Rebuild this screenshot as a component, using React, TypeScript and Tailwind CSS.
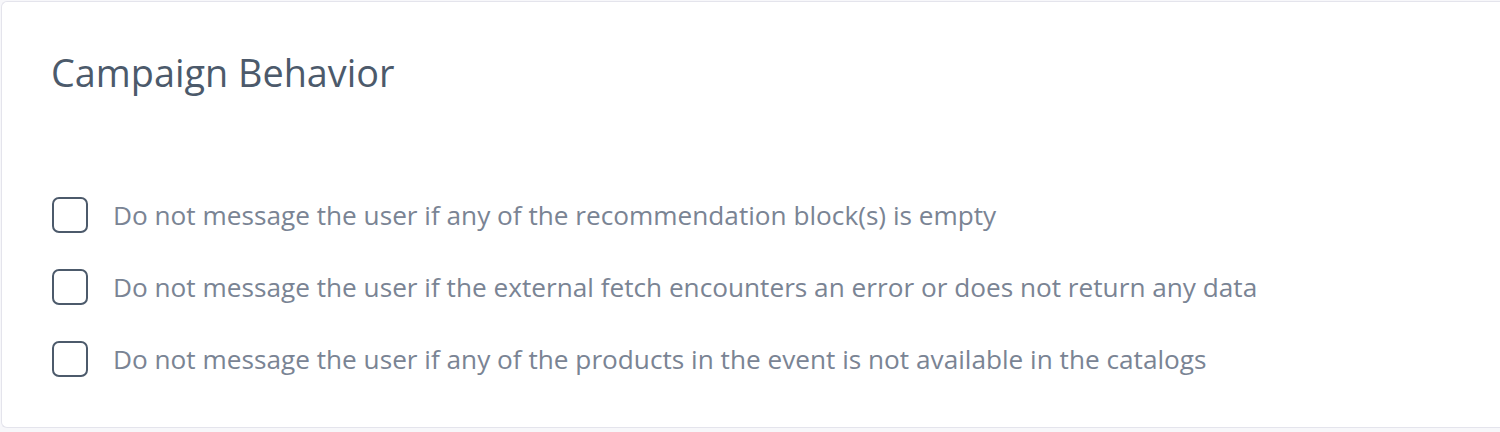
import { useState } from "react";

const options = [
  "Do not message the user if any of the recommendation block(s) is empty",
  "Do not message the user if the external fetch encounters an error or does not return any data",
  "Do not message the user if any of the products in the event is not available in the catalogs",
];

export default function App() {
  const [checked, setChecked] = useState<boolean[]>([false, false, false]);

  const toggle = (i: number) => {
    setChecked((prev) => prev.map((v, idx) => (idx === i ? !v : v)));
  };

  return (
    <div
      className="w-[1500px] h-[432px] bg-[#f7f7fa] pt-px pl-px"
      style={{ fontFamily: "'Open Sans', Lato, sans-serif" }}
    >
      <div className="h-[427px] bg-white border border-r-0 border-[#e4e4ec] rounded-tl-md rounded-bl-md pl-[50px] pt-[45px]">
        <h2 className="text-[37.8px] leading-[52px] text-[#4c5a6b] font-normal -ml-[1px]">Campaign Behavior</h2>

        {/* options */}
        <div className="mt-[98px] flex flex-col gap-[36px]">
          {options.map((label, i) => (
            <label key={label} className="flex items-center gap-[25px] cursor-pointer">
              <button
                type="button"
                onClick={() => toggle(i)}
                className={`w-[36px] h-[36px] shrink-0 rounded-[7px] border-2 border-[#4c5a6b] flex items-center justify-center ${
                  checked[i] ? "bg-[#4c5a6b]" : "bg-white"
                }`}
              >
                {checked[i] && (
                  <svg width="20" height="20" viewBox="0 0 20 20" fill="none">
                    <path d="M4 10l4 4 8-8" stroke="white" strokeWidth="2.5" />
                  </svg>
                )}
              </button>
              <span className="text-[26.2px] leading-[36px] text-[#7a8494]">{label}</span>
            </label>
          ))}
        </div>
      </div>
    </div>
  );
}
